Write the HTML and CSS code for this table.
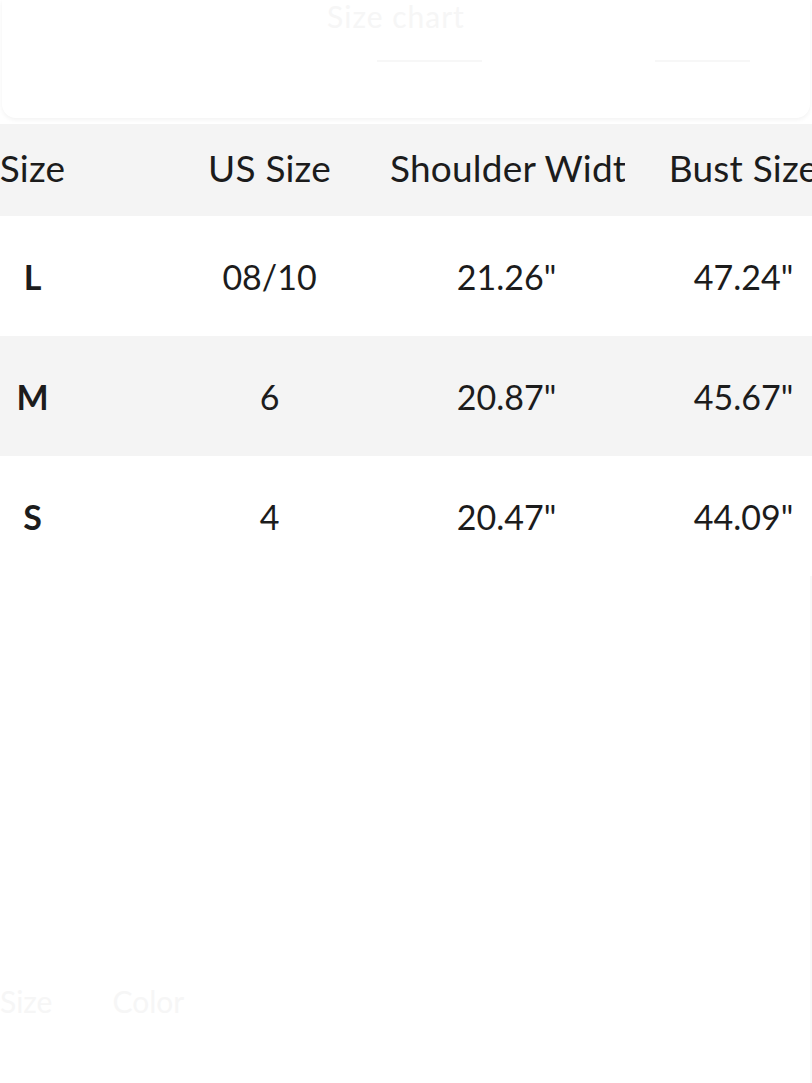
FILE: index.html
```html
<!DOCTYPE html>
<html lang="en">
<head>
<meta charset="utf-8">
<title>Size chart</title>
<link rel="stylesheet" href="styles.css">
</head>
<body>
<div class="page">
  <div class="top-card">
    <div class="ghost-title">Size chart</div>
    <div class="ghost-lines">
      <span class="ghost-line"></span>
      <span class="ghost-line right"></span>
    </div>
  </div>
  <div class="table-clip">
    <div class="table">
      <div class="row head">
        <div class="cell">Size</div>
        <div class="cell">US Size</div>
        <div class="cell">Shoulder Width</div>
        <div class="cell">Bust Size</div>
      </div>
      <div class="row">
        <div class="cell key">L</div>
        <div class="cell">08/10</div>
        <div class="cell">21.26"</div>
        <div class="cell">47.24"</div>
      </div>
      <div class="row alt">
        <div class="cell key">M</div>
        <div class="cell">6</div>
        <div class="cell">20.87"</div>
        <div class="cell">45.67"</div>
      </div>
      <div class="row">
        <div class="cell key">S</div>
        <div class="cell">4</div>
        <div class="cell">20.47"</div>
        <div class="cell">44.09"</div>
      </div>
    </div>
  </div>
  <div class="blank"></div>
  <div class="ghost-footer">
    <span>Size</span>
    <span>Color</span>
  </div>
</div>
</body>
</html>
```

FILE: styles.css
```css
html, body {
  margin: 0;
  padding: 0;
  background: #ffffff;
  overflow: hidden;
}

body {
  width: 812px;
  height: 1083px;
  font-family: "Lato", "Noto Sans", sans-serif;
  color: #1a1a1a;
}

.page {
  display: flex;
  flex-direction: column;
  height: 1083px;
}

.top-card {
  height: 118px;
  margin: 0 2px 6px 2px;
  background: #ffffff;
  border-radius: 0 0 14px 14px;
  box-shadow: 0 2px 4px rgba(0, 0, 0, 0.05);
  display: flex;
  flex-direction: column;
  align-items: center;
  flex-shrink: 0;
}

.ghost-title {
  margin-top: 0;
  font-size: 30px;
  line-height: 32px;
  color: #f6f6f6;
  margin-left: -20px;
  letter-spacing: 1px;
}

.ghost-lines {
  display: flex;
  width: 100%;
  justify-content: space-between;
  padding: 0 60px 0 375px;
  box-sizing: border-box;
  margin-top: 28px;
}

.ghost-line {
  width: 105px;
  height: 2px;
  background: #f7f7f7;
}

.ghost-line.right {
  width: 95px;
}

.table-clip {
  overflow: hidden;
  flex-shrink: 0;
}

.table {
  margin-left: -86px;
  width: 948px;
}

.row {
  display: grid;
  grid-template-columns: repeat(4, 237px);
  height: 120px;
  align-items: center;
  background: #ffffff;
}

.row.head {
  height: 92px;
  background: #f4f4f4;
  padding-bottom: 5px;
  box-sizing: border-box;
}

.row.alt {
  background: #f4f4f4;
}

.cell {
  text-align: center;
  overflow: hidden;
  white-space: nowrap;
  font-size: 34px;
  padding: 0 2px;
  color: #1c1c1c;
}

.row.head .cell {
  font-size: 37px;
  letter-spacing: 0.2px;
}

.cell.key {
  font-weight: 700;
}

.blank {
  flex: 1;
  border-right: 2px solid #f8f8f8;
}

.ghost-footer {
  height: 100px;
  display: flex;
  gap: 60px;
  padding-left: 0;
  font-size: 30px;
  color: #f6f6f6;
  border-right: 2px solid #f8f8f8;
}
```
